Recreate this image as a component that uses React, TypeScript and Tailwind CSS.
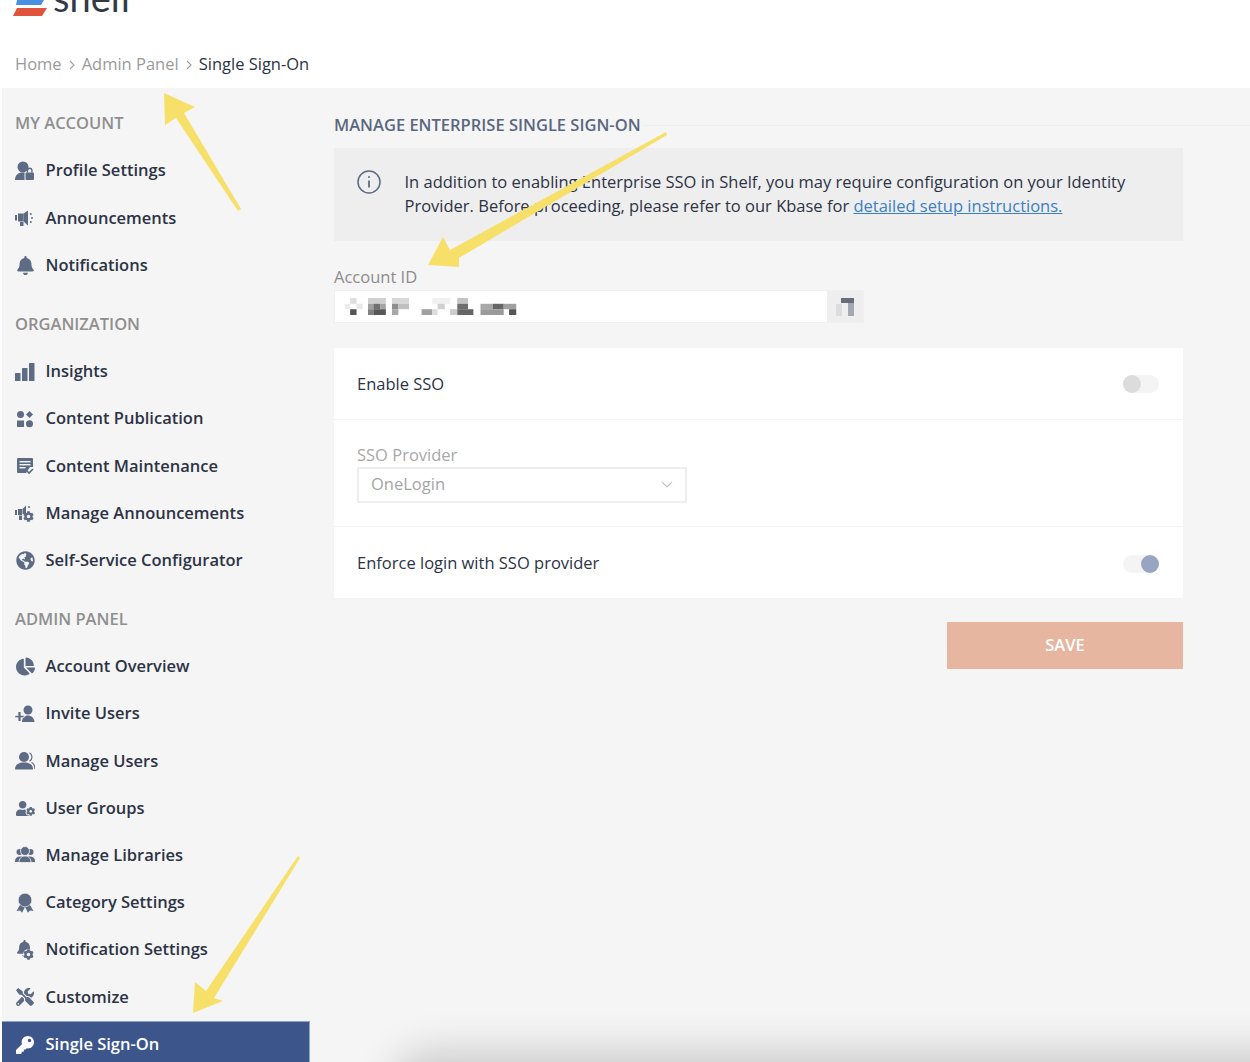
import React from "react";
import { FaBell, FaGlobeAmericas, FaChartPie, FaUserCog, FaTools, FaKey, FaCog } from "react-icons/fa";

const S = ({ children }: { children: React.ReactNode }) => (
  <svg viewBox="0 0 20 20" width="20" height="20" fill="currentColor">{children}</svg>
);

const ProfileLock = () => (
  <S>
    <circle cx="8" cy="6" r="5.500" />
    <path d="M0 19c0-5 3-7.500 8-7.500h2V19z" />
    <rect x="9.500" y="10.500" width="10" height="9" rx="1.500" fill="#f5f5f5" />
    <rect x="10.500" y="11.500" width="8.500" height="7.500" rx="1" />
    <path d="M12.500 11.500V9.500a2.200 2.200 0 0 1 4.400 0v2" fill="none" stroke="currentColor" strokeWidth="1.400" />
  </S>
);
const Bullhorn = () => (
  <S>
    <rect x="0" y="7" width="2" height="5.500" />
    <rect x="3" y="5.500" width="5.500" height="8" />
    <path d="M8.500 5.500 13 2.500v15l-4.500-4z" />
    <rect x="5" y="14" width="3.500" height="4" />
    <circle cx="15.800" cy="6" r="1" />
    <circle cx="17" cy="10" r="1" />
    <circle cx="15.800" cy="14" r="1" />
  </S>
);
const Bars = () => (
  <S>
    <rect x="0" y="11" width="5.500" height="8" rx="0.500" />
    <rect x="7" y="6" width="5.500" height="13" rx="0.500" />
    <rect x="14" y="1" width="5.500" height="18" rx="0.500" />
  </S>
);
const Publication = () => (
  <S>
    <circle cx="5.500" cy="5.500" r="3.500" />
    <path d="M14.500 2 18 5.500 14.500 9 11 5.500z" />
    <rect x="2" y="11.500" width="7" height="6.500" />
    <circle cx="14.500" cy="14.800" r="3.500" />
  </S>
);
const Maintenance = () => (
  <S>
    <path d="M3 2h14a1 1 0 0 1 1 1v8h-3l-4 6H3a1 1 0 0 1-1-1V3a1 1 0 0 1 1-1z" />
    <rect x="4.500" y="5" width="11" height="1.400" fill="#f5f5f5" />
    <rect x="4.500" y="8" width="11" height="1.400" fill="#f5f5f5" />
    <rect x="4.500" y="11" width="6" height="1.400" fill="#f5f5f5" />
    <path d="m12 15 2 2 4-4" fill="none" stroke="currentColor" strokeWidth="1.600" />
  </S>
);
const ManageAnn = () => (
  <div className="relative h-5 w-5">
    <svg viewBox="0 0 20 20" width="20" height="20" fill="currentColor">
      <rect x="0" y="7" width="2" height="5" />
      <rect x="3" y="6" width="4" height="6" />
      <path d="M7.500 6 11 2.500V11H7.500z" />
      <rect x="4" y="12.500" width="3" height="4.500" />
      <circle cx="14" cy="4" r="1" />
    </svg>
    <FaCog className="absolute bottom-[1px] right-[1px] text-[11px]" />
  </div>
);
const InviteUsers = () => (
  <S>
    <circle cx="13" cy="6" r="4.500" />
    <path d="M7 18c0-4 2.500-6.500 6-6.500s6 2.500 6.500 6.500z" />
    <rect x="0" y="11.500" width="9" height="2.200" stroke="#f5f5f5" strokeWidth="0.600" />
    <rect x="3.400" y="8" width="2.200" height="9" />
  </S>
);
const ManageUsers = () => (
  <S>
    <circle cx="9" cy="6" r="5" />
    <path d="M0 18.500c0-5 3.500-7 9-7s9 2 9 7z" />
    <path d="M14.500 1.800a4.800 4.800 0 0 1 0 8.400M16.500 11.500c2 .8 3.300 2.800 3.500 6.500" fill="none" stroke="currentColor" strokeWidth="1.200" />
  </S>
);
const Libraries = () => (
  <S>
    <circle cx="4.500" cy="7" r="3" />
    <circle cx="15.500" cy="7" r="3" />
    <path d="M0 16c0-3 2-4.500 5-4.500h10c3 0 5 1.500 5 4.500v1H0z" />
    <circle cx="10" cy="6" r="4.500" stroke="#f5f5f5" strokeWidth="0.800" />
    <path d="M4 17.500c0-4 2.500-6.500 6-6.500s6 2.500 6 6.500z" stroke="#f5f5f5" strokeWidth="0.800" />
  </S>
);
const Ribbon = () => (
  <S>
    <path d="M5 12 1.500 18l3.500-.5 2 2.300L10 14l3 5.800 2-2.300 3.500.5L15 12z" />
    <circle cx="10" cy="7" r="6.800" stroke="#f5f5f5" strokeWidth="0.600" />
  </S>
);
const BellCog = () => (
  <div className="relative h-5 w-5">
    <FaBell className="absolute left-[1px] top-0 text-[17px]" />
    <FaCog className="absolute bottom-0 right-[1px] rounded-full bg-[#f5f5f5] text-[11px]" />
  </div>
);
const Chevron = () => (
  <svg viewBox="0 0 6 10" width="6" height="10" fill="none" stroke="#a0a0a0" strokeWidth="1.100" className="mx-[7px] mt-px shrink-0">
    <path d="m1 1 4 4-4 4" />
  </svg>
);

type Item = { label: string; icon: React.ReactNode; active?: boolean };

const sections: { title: string; items: Item[] }[] = [
  {
    title: "MY ACCOUNT",
    items: [
      { label: "Profile Settings", icon: <ProfileLock /> },
      { label: "Announcements", icon: <Bullhorn /> },
      { label: "Notifications", icon: <FaBell className="text-[19px]" /> },
    ],
  },
  {
    title: "ORGANIZATION",
    items: [
      { label: "Insights", icon: <Bars /> },
      { label: "Content Publication", icon: <Publication /> },
      { label: "Content Maintenance", icon: <Maintenance /> },
      { label: "Manage Announcements", icon: <ManageAnn /> },
      { label: "Self-Service Configurator", icon: <FaGlobeAmericas className="text-[19px]" /> },
    ],
  },
  {
    title: "ADMIN PANEL",
    items: [
      { label: "Account Overview", icon: <FaChartPie className="text-[19px]" /> },
      { label: "Invite Users", icon: <InviteUsers /> },
      { label: "Manage Users", icon: <ManageUsers /> },
      { label: "User Groups", icon: <FaUserCog className="text-[19px]" /> },
      { label: "Manage Libraries", icon: <Libraries /> },
      { label: "Category Settings", icon: <Ribbon /> },
      { label: "Notification Settings", icon: <BellCog /> },
      { label: "Customize", icon: <FaTools className="text-[18px]" /> },
      { label: "Single Sign-On", icon: <FaKey className="text-[18px]" />, active: true },
    ],
  },
];

const Toggle = ({ on }: { on?: boolean }) => (
  <div className={`flex h-[18px] w-9 rounded-full bg-[#f4f4f4] ${on ? "justify-end" : "justify-start"}`}>
    <div className={`h-[18px] w-[18px] rounded-full ${on ? "bg-[#97a5c3]" : "bg-[#dcdcdc]"}`} />
  </div>
);

const pixels: [number, number, number, number, string][] = [
  [80, 595, 18, 17, "#dedede"], [130, 595, 50, 17, "#cfcfcf"], [197, 595, 48, 17, "#d8d8d8"], [310, 595, 50, 17, "#f0f0f0"], [380, 595, 30, 17, "#c4c4c4"],
  [65, 612, 15, 16, "#ececec"], [98, 612, 17, 16, "#e8e8e8"], [130, 612, 15, 16, "#a0a0a0"], [145, 612, 20, 16, "#707070"], [165, 612, 15, 16, "#a4a4a4"],
  [197, 612, 18, 16, "#8f8f8f"], [215, 612, 30, 16, "#c0c0c0"], [325, 612, 20, 16, "#d0d0d0"], [380, 612, 30, 16, "#6e6e6e"], [445, 612, 35, 16, "#a8a8a8"], [480, 612, 30, 16, "#666666"], [510, 612, 35, 16, "#a0a0a0"],
  [80, 628, 18, 17, "#555555"], [130, 628, 15, 17, "#808080"], [145, 628, 35, 17, "#585858"], [197, 628, 18, 17, "#a8a8a8"], [280, 628, 30, 17, "#a0a0a0"], [310, 628, 15, 17, "#dddddd"], [360, 628, 20, 17, "#cccccc"], [380, 628, 45, 17, "#666666"], [445, 628, 65, 17, "#9a9a9a"], [525, 628, 20, 17, "#555555"],
];

export default function App() {
  return (
    <div className="relative h-[1062px] w-[1250px] overflow-hidden bg-white font-['Open_Sans',sans-serif] text-[16.5px] text-[#2c3345]">
      <header className="h-[88px] overflow-hidden pl-[13px]">
        <div className="-mt-[25px] flex h-[45px] items-end">
          <svg viewBox="0 0 34 16" width="34" height="16" className="mb-[4px] shrink-0">
            <path d="M4 0h27l-3 5H3z" fill="#4a90e2" />
            <path d="M4 8h30l-5 8H0z" fill="#e0533c" />
          </svg>
          <span className="ml-[6px] font-['Lato',sans-serif] text-[38px] leading-[45px] text-[#333a47]">shelf</span>
        </div>
        <nav className="mt-[32px] flex h-6 items-center pl-[2px] leading-6 text-[#9a9a9a]">
          <span>Home</span>
          <Chevron />
          <span>Admin Panel</span>
          <Chevron />
          <span className="text-[#2c3345]">Single Sign-On</span>
        </nav>
      </header>

      <div className="ml-[2px] flex h-[974px] bg-[#f5f5f5]">
        <aside className="w-[308px] shrink-0 pt-3">
          {sections.map((s) => (
            <section key={s.title} className="mb-3">
              <h2 className="flex h-[47.2px] items-center pl-[13px] font-semibold text-[#8f8f8f]">{s.title}</h2>
              <ul>
                {s.items.map((it) => (
                  <li
                    key={it.label}
                    className={`flex h-[47.2px] items-center pl-[13px] font-semibold ${
                      it.active ? "border-t border-r border-[#8fa5c8] bg-[#3c568c] text-white" : ""
                    }`}
                  >
                    <span className={`flex h-5 w-5 items-center justify-center ${it.active ? "text-white" : "text-[#5d6b85]"}`}>
                      {it.icon}
                    </span>
                    <span className="ml-[10.500px]">{it.label}</span>
                  </li>
                ))}
              </ul>
            </section>
          ))}
        </aside>

        <main className="min-w-0 flex-1 pl-6 pt-[25px]">
          <div className="flex h-6 items-center">
            <h1 className="font-semibold text-[#5a6780]">MANAGE ENTERPRISE SINGLE SIGN-ON</h1>
            <div className="ml-[2px] h-px flex-1 bg-[#efefef]" />
          </div>

          <div className="w-[849px]">
            <div className="mt-[11px] flex h-[93px] items-start bg-[#eeeeee] pl-[23px] pt-[22px]">
              <svg viewBox="0 0 24 24" width="24" height="24" fill="none" stroke="#5d6b85" strokeWidth="1.500" className="shrink-0">
                <circle cx="12" cy="12" r="11" />
                <path d="M12 10.500v7" strokeWidth="1.800" />
                <circle cx="12" cy="7" r="1" fill="#5d6b85" stroke="none" />
              </svg>
              <p className="ml-[23.500px] leading-6">
                In addition to enabling Enterprise SSO in Shelf, you may require configuration on your Identity
                <br />
                Provider. Before proceeding, please refer to our Kbase for{" "}
                <a className="text-[#3b7fc4] underline">detailed setup instructions.</a>
              </p>
            </div>

            <div className="mt-6 leading-6 text-[#8c8c8c]">Account ID</div>
            <div className="mt-px flex h-[33px] w-[530px] border border-[#f0f0f0]">
              <div className="flex flex-1 items-center bg-white pl-[8px]">
                <svg viewBox="60 595 490 50" width="175" height="17" preserveAspectRatio="none">
                  {pixels.map(([x, y, w, h, c], i) => (
                    <rect key={i} x={x} y={y} width={w} height={h} fill={c} />
                  ))}
                </svg>
              </div>
              <div className="flex w-9 items-center justify-center bg-[#eeeeee]">
                <svg viewBox="0 0 18 18" width="18" height="18">
                  <rect x="0" y="6" width="6" height="12" fill="#dcdcdc" />
                  <rect x="5" y="0" width="13" height="5" fill="#666e7d" />
                  <rect x="12" y="5" width="6" height="13" fill="#a4a8b0" />
                </svg>
              </div>
            </div>

            <div className="mt-[25px] bg-white">
              <div className="flex h-[71.500px] items-center justify-between border-b-[1.500px] border-[#f3f3f3] pl-[23px] pr-6 pt-[2px]">
                <span>Enable SSO</span>
                <Toggle />
              </div>
              <div className="h-[107.500px] border-b-[1.500px] border-[#f3f3f3] pl-[23px] pt-[23px]">
                <div className="leading-6 text-[#a8a8a8]">SSO Provider</div>
                <div className="flex h-[36px] w-[330px] items-center justify-between border-2 border-[#eeeeee] pl-3 pr-[12px] text-[#a5a5a5]">
                  <span>OneLogin</span>
                  <svg viewBox="0 0 12 8" width="12" height="8" fill="none" stroke="#c4c4c4" strokeWidth="1.200">
                    <path d="m1 1 5 5 5-5" />
                  </svg>
                </div>
              </div>
              <div className="flex h-[71px] items-center justify-between pl-[23px] pr-6 pt-[2px]">
                <span>Enforce login with SSO provider</span>
                <Toggle on />
              </div>
            </div>

            <div className="mt-[24px] flex justify-end">
              <button className="h-[47px] w-[236px] bg-[#e6b6a0] font-semibold text-white">SAVE</button>
            </div>
          </div>
        </main>
      </div>

      {/* soft shadow along the lower edge */}
      <div className="absolute left-[410px] top-[1076px] h-10 w-[1000px] rounded-l-[30px] shadow-[0_-6px_40px_18px_rgba(0,0,0,0.18)]" />

      {/* annotation arrows drawn on top of the screenshot */}
      <svg viewBox="0 0 1250 1062" width="1250" height="1062" className="pointer-events-none absolute left-0 top-0" fill="#f7e06a">
        <path d="M164 93 195 107 184 113 241 209 238 211 176 118 165 125z" />
        <path d="M428 265 443 237 450 250 666 132 667 135 459 258 459 267z" />
        <path d="M193 1013 195 982 206 991 298 856 300 858 214 998 223 1001z" />
      </svg>
    </div>
  );
}
